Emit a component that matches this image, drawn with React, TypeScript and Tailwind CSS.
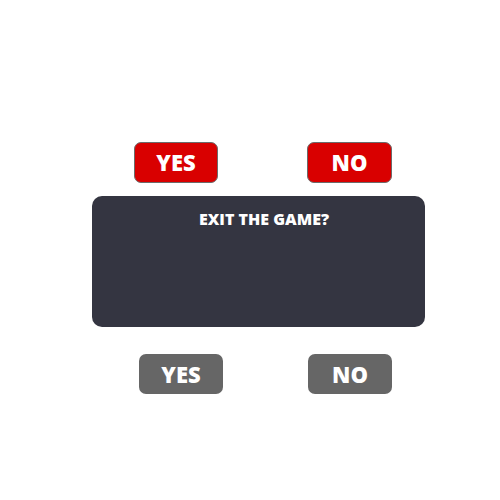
export default function App() {
  const font = { fontFamily: '"Open Sans", "Liberation Sans", sans-serif' };
  return (
    <div className="w-[500px] h-[500px] bg-white flex flex-col" style={font}>
      <div className="flex mt-[142px] pl-[134px]">
        <div className="w-[84px] h-[41px] rounded-[7px] bg-[#d90000] border border-[#6b6b6b] flex items-center justify-center text-white font-extrabold text-[22px] leading-none pb-[1px]">
          YES
        </div>
        <div className="ml-[89px] w-[85px] h-[41px] rounded-[7px] bg-[#d90000] border border-[#6b6b6b] flex items-center justify-center text-white font-extrabold text-[22px] leading-none pb-[1px]">
          NO
        </div>
      </div>
      <div className="ml-[92px] mt-[13px] w-[333px] h-[131px] rounded-[10px] bg-[#343541] flex justify-center pl-[11px] pt-[13px]">
        <span className="text-white font-extrabold text-[16px] leading-[20px]">EXIT THE GAME?</span>
      </div>
      <div className="flex mt-[27px] pl-[139px]">
        <div className="w-[84px] h-[40px] rounded-[7px] bg-[#666666] flex items-center justify-center text-white font-extrabold text-[22px] leading-none pb-[1px]">
          YES
        </div>
        <div className="ml-[85px] w-[84px] h-[40px] rounded-[7px] bg-[#666666] flex items-center justify-center text-white font-extrabold text-[22px] leading-none pb-[1px]">
          NO
        </div>
      </div>
    </div>
  );
}
